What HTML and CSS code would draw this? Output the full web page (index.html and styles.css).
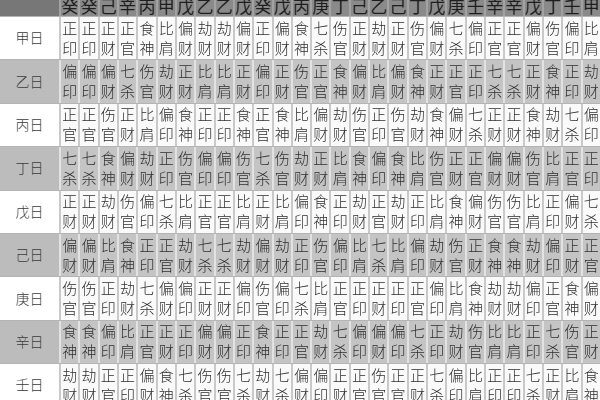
FILE: index.html
```html
<!DOCTYPE html>
<html lang="zh">
<head>
<meta charset="utf-8">
<title>十神表</title>
<link rel="stylesheet" href="styles.css">
</head>
<body>
<div class="table">
  <div class="row head">
    <div class="lab"></div>
    <div class="c">癸</div><div class="c">癸</div><div class="c">己</div><div class="c">辛</div><div class="c">丙</div><div class="c">甲</div><div class="c">戊</div><div class="c">乙</div><div class="c">乙</div><div class="c">戊</div><div class="c">癸</div><div class="c">戊</div><div class="c">丙</div><div class="c">庚</div><div class="c">丁</div><div class="c">己</div><div class="c">乙</div><div class="c">己</div><div class="c">丁</div><div class="c">戊</div><div class="c">庚</div><div class="c">壬</div><div class="c">辛</div><div class="c">辛</div><div class="c">戊</div><div class="c">丁</div><div class="c">壬</div><div class="c">甲</div>
  </div>
  <div class="row w">
    <div class="lab">甲日</div>
    <div class="c">正印</div><div class="c">正印</div><div class="c">正财</div><div class="c">正官</div><div class="c">食神</div><div class="c">比肩</div><div class="c">偏财</div><div class="c">劫财</div><div class="c">劫财</div><div class="c">偏财</div><div class="c">正印</div><div class="c">偏财</div><div class="c">食神</div><div class="c">七杀</div><div class="c">伤官</div><div class="c">正财</div><div class="c">劫财</div><div class="c">正财</div><div class="c">伤官</div><div class="c">偏财</div><div class="c">七杀</div><div class="c">偏印</div><div class="c">正官</div><div class="c">正官</div><div class="c">偏财</div><div class="c">伤官</div><div class="c">偏印</div><div class="c">比肩</div>
  </div>
  <div class="row g">
    <div class="lab">乙日</div>
    <div class="c">偏印</div><div class="c">偏印</div><div class="c">偏财</div><div class="c">七杀</div><div class="c">伤官</div><div class="c">劫财</div><div class="c">正财</div><div class="c">比肩</div><div class="c">比肩</div><div class="c">正财</div><div class="c">偏印</div><div class="c">正财</div><div class="c">伤官</div><div class="c">正官</div><div class="c">食神</div><div class="c">偏财</div><div class="c">比肩</div><div class="c">偏财</div><div class="c">食神</div><div class="c">正财</div><div class="c">正官</div><div class="c">正印</div><div class="c">七杀</div><div class="c">七杀</div><div class="c">正财</div><div class="c">食神</div><div class="c">正印</div><div class="c">劫财</div>
  </div>
  <div class="row w">
    <div class="lab">丙日</div>
    <div class="c">正官</div><div class="c">正官</div><div class="c">伤官</div><div class="c">正财</div><div class="c">比肩</div><div class="c">偏印</div><div class="c">食神</div><div class="c">正印</div><div class="c">正印</div><div class="c">食神</div><div class="c">正官</div><div class="c">食神</div><div class="c">比肩</div><div class="c">偏财</div><div class="c">劫财</div><div class="c">伤官</div><div class="c">正印</div><div class="c">伤官</div><div class="c">劫财</div><div class="c">食神</div><div class="c">偏财</div><div class="c">七杀</div><div class="c">正财</div><div class="c">正财</div><div class="c">食神</div><div class="c">劫财</div><div class="c">七杀</div><div class="c">偏印</div>
  </div>
  <div class="row g">
    <div class="lab">丁日</div>
    <div class="c">七杀</div><div class="c">七杀</div><div class="c">食神</div><div class="c">偏财</div><div class="c">劫财</div><div class="c">正印</div><div class="c">伤官</div><div class="c">偏印</div><div class="c">偏印</div><div class="c">伤官</div><div class="c">七杀</div><div class="c">伤官</div><div class="c">劫财</div><div class="c">正财</div><div class="c">比肩</div><div class="c">食神</div><div class="c">偏印</div><div class="c">食神</div><div class="c">比肩</div><div class="c">伤官</div><div class="c">正财</div><div class="c">正官</div><div class="c">偏财</div><div class="c">偏财</div><div class="c">伤官</div><div class="c">比肩</div><div class="c">正官</div><div class="c">正印</div>
  </div>
  <div class="row w">
    <div class="lab">戊日</div>
    <div class="c">正财</div><div class="c">正财</div><div class="c">劫财</div><div class="c">伤官</div><div class="c">偏印</div><div class="c">七杀</div><div class="c">比肩</div><div class="c">正官</div><div class="c">正官</div><div class="c">比肩</div><div class="c">正财</div><div class="c">比肩</div><div class="c">偏印</div><div class="c">食神</div><div class="c">正印</div><div class="c">劫财</div><div class="c">正官</div><div class="c">劫财</div><div class="c">正印</div><div class="c">比肩</div><div class="c">食神</div><div class="c">偏财</div><div class="c">伤官</div><div class="c">伤官</div><div class="c">比肩</div><div class="c">正印</div><div class="c">偏财</div><div class="c">七杀</div>
  </div>
  <div class="row g">
    <div class="lab">己日</div>
    <div class="c">偏财</div><div class="c">偏财</div><div class="c">比肩</div><div class="c">食神</div><div class="c">正印</div><div class="c">正官</div><div class="c">劫财</div><div class="c">七杀</div><div class="c">七杀</div><div class="c">劫财</div><div class="c">偏财</div><div class="c">劫财</div><div class="c">正印</div><div class="c">伤官</div><div class="c">偏印</div><div class="c">比肩</div><div class="c">七杀</div><div class="c">比肩</div><div class="c">偏印</div><div class="c">劫财</div><div class="c">伤官</div><div class="c">正财</div><div class="c">食神</div><div class="c">食神</div><div class="c">劫财</div><div class="c">偏印</div><div class="c">正财</div><div class="c">正官</div>
  </div>
  <div class="row w">
    <div class="lab">庚日</div>
    <div class="c">伤官</div><div class="c">伤官</div><div class="c">正印</div><div class="c">劫财</div><div class="c">七杀</div><div class="c">偏财</div><div class="c">偏印</div><div class="c">正财</div><div class="c">正财</div><div class="c">偏印</div><div class="c">伤官</div><div class="c">偏印</div><div class="c">七杀</div><div class="c">比肩</div><div class="c">正官</div><div class="c">正印</div><div class="c">正财</div><div class="c">正印</div><div class="c">正官</div><div class="c">偏印</div><div class="c">比肩</div><div class="c">食神</div><div class="c">劫财</div><div class="c">劫财</div><div class="c">偏印</div><div class="c">正官</div><div class="c">食神</div><div class="c">偏财</div>
  </div>
  <div class="row g">
    <div class="lab">辛日</div>
    <div class="c">食神</div><div class="c">食神</div><div class="c">偏印</div><div class="c">比肩</div><div class="c">正官</div><div class="c">正财</div><div class="c">正印</div><div class="c">偏财</div><div class="c">偏财</div><div class="c">正印</div><div class="c">食神</div><div class="c">正印</div><div class="c">正官</div><div class="c">劫财</div><div class="c">七杀</div><div class="c">偏印</div><div class="c">偏财</div><div class="c">偏印</div><div class="c">七杀</div><div class="c">正印</div><div class="c">劫财</div><div class="c">伤官</div><div class="c">比肩</div><div class="c">比肩</div><div class="c">正印</div><div class="c">七杀</div><div class="c">伤官</div><div class="c">正财</div>
  </div>
  <div class="row w">
    <div class="lab">壬日</div>
    <div class="c">劫财</div><div class="c">劫财</div><div class="c">正官</div><div class="c">正印</div><div class="c">偏财</div><div class="c">食神</div><div class="c">七杀</div><div class="c">伤官</div><div class="c">伤官</div><div class="c">七杀</div><div class="c">劫财</div><div class="c">七杀</div><div class="c">偏财</div><div class="c">偏印</div><div class="c">正财</div><div class="c">正官</div><div class="c">伤官</div><div class="c">正官</div><div class="c">正财</div><div class="c">七杀</div><div class="c">偏印</div><div class="c">比肩</div><div class="c">正印</div><div class="c">正印</div><div class="c">七杀</div><div class="c">正财</div><div class="c">比肩</div><div class="c">食神</div>
  </div>
</div>
</body>
</html>
```

FILE: styles.css
```css
html, body {
  margin: 0;
  padding: 0;
  background: #ffffff;
}
body {
  width: 600px;
  height: 400px;
  overflow: hidden;
  font-family: "Noto Sans CJK SC", "Noto Sans CJK TC", sans-serif;
  color: #2e2e2e;
}
.table {
  width: 600px;
  filter: grayscale(1);
}
.row {
  display: grid;
  grid-template-columns: 59px repeat(28, 1fr);
  height: 43.4px;
  border-top: 1px solid #b4b4b4;
  box-sizing: border-box;
}
.lab {
  display: flex;
  align-items: center;
  justify-content: center;
  font-size: 14px;
  font-weight: 300;
  color: #3c3c3c;
  padding-bottom: 2px;
}
.c {
  display: flex;
  align-items: center;
  justify-content: center;
  text-align: center;
  font-size: 15px;
  font-weight: 300;
  line-height: 20px;
  min-width: 0;
  overflow: hidden;
  border-left: 2px solid #c9c9c9;
  padding-bottom: 1px;
}
.w .lab { background: #ffffff; }
.w .c { background: #fafafa; }
.g .lab { background: #bcbcbc; }
.g .c {
  background: #c4c4c4;
  border-left-color: #e2e2e2;
}
.head {
  height: 16px;
  border-top: 0;
  overflow: hidden;
}
.head .lab { background: #777777; }
.head .c {
  background: #8a8a8a;
  border-left-color: #a2a2a2;
  align-items: flex-end;
  font-size: 17px;
  font-weight: 400;
  line-height: 17px;
  color: #1e1e1e;
  padding-bottom: 2px;
}
```
